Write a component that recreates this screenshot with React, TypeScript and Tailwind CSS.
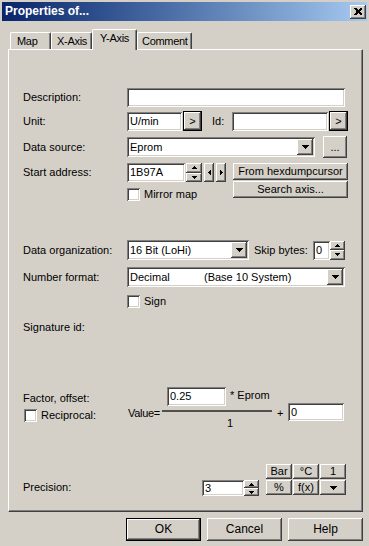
import React from 'react'

// classic 3D bevels
const RAISED =
  'bg-[#d4d0c8] shadow-[inset_-1px_-1px_0_#404040,inset_1px_1px_0_#ffffff,inset_-2px_-2px_0_#808080,inset_2px_2px_0_#d4d0c8]'
const SUNKEN =
  'bg-white shadow-[inset_1px_1px_0_#808080,inset_-1px_-1px_0_#ffffff,inset_2px_2px_0_#404040,inset_-2px_-2px_0_#d4d0c8]'

type Dir = 'up' | 'down' | 'left' | 'right'

// tiny pixel triangles
function Tri({ dir, n = 3 }: { dir: Dir; n?: number }) {
  const rows = Array.from({ length: n }, (_, i) => i)
  const span = n * 2 - 1
  const vertical = dir === 'up' || dir === 'down'
  const w = vertical ? span : n
  const h = vertical ? n : span
  return (
    <svg width={w} height={h} shapeRendering="crispEdges" className="block">
      {rows.map((i) => {
        const len = dir === 'up' || dir === 'left' ? i * 2 + 1 : span - i * 2
        const off = (span - len) / 2
        if (vertical) return <rect key={i} x={off} y={i} width={len} height={1} fill="#000" />
        return <rect key={i} x={i} y={off} width={1} height={len} fill="#000" />
      })}
    </svg>
  )
}

function Field({ className = '', children }: { className?: string; children?: React.ReactNode }) {
  return <div className={`${SUNKEN} flex items-center pl-[3px] ${className}`}>{children}</div>
}

function Btn({
  className = '',
  children,
  def = false
}: {
  className?: string
  children?: React.ReactNode
  def?: boolean
}) {
  return (
    <div
      className={`${RAISED} flex items-center justify-center ${def ? 'border border-black' : ''} ${className}`}
    >
      {children}
    </div>
  )
}

function Spin({ className = '' }: { className?: string }) {
  return (
    <div className={`flex flex-col ${className}`}>
      <div className={`${RAISED} flex-1 flex items-center justify-center`}>
        <Tri dir="up" />
      </div>
      <div className={`${RAISED} flex-1 flex items-center justify-center`}>
        <Tri dir="down" />
      </div>
    </div>
  )
}

function Select({ className = '', children }: { className?: string; children?: React.ReactNode }) {
  return (
    <div className={`${SUNKEN} h-[20px] flex items-center pl-[3px] pr-[2px] ${className}`}>
      <div className="flex-1 flex items-center">{children}</div>
      <div className={`${RAISED} w-[16px] h-[16px] flex items-center justify-center`}>
        <Tri dir="down" n={4} />
      </div>
    </div>
  )
}

function Check() {
  return <div className={`${SUNKEN} w-[13px] h-[13px] shrink-0`} />
}

function Tab({ label, width, active = false, pl }: { label: string; width: string; active?: boolean; pl: string }) {
  return (
    <div
      className={`${width} ${pl} flex items-center tracking-[-0.3px] border-l border-t border-r border-l-white border-t-white border-r-[#404040] rounded-t-[2px] shadow-[inset_-1px_0_0_#808080] bg-[#d4d0c8] ${
        active ? 'h-[21px] pb-[3px]' : 'h-[17px] mb-px pt-px'
      }`}
    >
      {label}
    </div>
  )
}

export default function App() {
  return (
    <div className="w-[369px] h-[546px] overflow-hidden bg-[#d4d0c8] text-black text-[11px] leading-[13px] font-['Liberation_Sans',Arial,sans-serif]">
      {/* Title bar */}
      <div className="mx-[2px] mt-[2px] h-[19px] flex items-center pl-[3px] bg-linear-to-r from-[#0a246a] to-[#a6caf0]">
        <span className="text-white font-bold text-[12px]">Properties of...</span>
        <Btn className="ml-auto mr-[1px] w-[16px] h-[14px]">
          <svg width="8" height="7" shapeRendering="crispEdges">
            <path d="M0 0h2l2 2 2-2h2v1l-2 2v1l2 2v1h-2l-2-2-2 2h-2v-1l2-2v-1l-2-2z" fill="#000" />
          </svg>
        </Btn>
      </div>

      <div className="pl-[8px]">
        {/* Tabs */}
        <div className="mt-[8px] ml-[2px] flex items-end h-[21px] -mb-px relative z-10">
          <Tab label="Map" width="w-[41px]" pl="pl-[6px]" />
          <Tab label="X-Axis" width="w-[41px]" pl="pl-[5px]" />
          <Tab label="Y-Axis" width="w-[45px]" pl="pl-[7px]" active />
          <Tab label="Comment" width="w-[55px]" pl="pl-[4px]" />
        </div>

        {/* Tab panel */}
        <div className="w-[355px] h-[463px] border border-t-white border-l-white border-r-[#404040] border-b-[#404040] shadow-[inset_-1px_-1px_0_#808080] pl-[14px]">
          {/* Description */}
          <div className="mt-[38px] h-[19px] flex items-center">
            <div className="w-[104px]">Description:</div>
            <Field className="w-[218px] h-[19px]" />
          </div>

          {/* Unit / Id */}
          <div className="mt-[4px] h-[20px] flex items-center">
            <div className="w-[104px]">Unit:</div>
            <Field className="w-[55px] h-[19px]">U/min</Field>
            <Btn def className="ml-px w-[19px] h-[20px]">&gt;</Btn>
            <div className="ml-[10px] w-[20px]">Id:</div>
            <Field className="w-[96px] h-[19px]" />
            <Btn def className="ml-px w-[19px] h-[20px]">&gt;</Btn>
          </div>

          {/* Data source */}
          <div className="mt-[5px] h-[22px] flex items-center">
            <div className="w-[104px]">Data source:</div>
            <Select className="w-[188px]">Eprom</Select>
            <Btn className="ml-[8px] w-[24px] h-[22px]">...</Btn>
          </div>

          {/* Start address */}
          <div className="mt-[5px] flex items-start">
            <div className="w-[104px] h-[19px] flex items-center">Start address:</div>
            <div className="flex flex-col">
              <div className="flex h-[19px]">
                <Field className="w-[58px] h-[19px]">1B97A</Field>
                <Spin className="ml-px w-[16px] h-[19px]" />
                <Btn className="ml-[2px] w-[10px] h-[19px]">
                  <Tri dir="left" />
                </Btn>
                <Btn className="ml-[2px] w-[10px] h-[19px]">
                  <Tri dir="right" />
                </Btn>
              </div>
              <div className="mt-[6px] h-[13px] flex items-center">
                <Check />
                <span className="ml-[4px]">Mirror map</span>
              </div>
            </div>
            <div className="ml-[7px] flex flex-col gap-px">
              <Btn className="w-[115px] h-[17px]">From hexdumpcursor</Btn>
              <Btn className="w-[115px] h-[17px]">Search axis...</Btn>
            </div>
          </div>

          {/* Data organization */}
          <div className="mt-[39px] h-[20px] flex items-center">
            <div className="w-[104px]">Data organization:</div>
            <Select className="w-[122px]">16 Bit (LoHi)</Select>
            <div className="ml-[5px] w-[59px]">Skip bytes:</div>
            <Field className="w-[17px] h-[19px]">0</Field>
            <Spin className="w-[15px] h-[19px]" />
          </div>

          {/* Number format */}
          <div className="mt-[7px] h-[20px] flex items-center">
            <div className="w-[104px]">Number format:</div>
            <Select className="w-[218px]">
              <span className="w-[74px]">Decimal</span>
              <span>(Base 10 System)</span>
            </Select>
          </div>

          {/* Sign */}
          <div className="mt-[8px] h-[13px] flex items-center pl-[104px]">
            <Check />
            <span className="ml-[4px]">Sign</span>
          </div>

          {/* Signature id */}
          <div className="mt-[13px] h-[13px] flex items-center">Signature id:</div>

          {/* Factor, offset */}
          <div className="mt-[53px] flex items-start">
            <div className="w-[105px] flex flex-col">
              <div className="mt-[5px] h-[13px]">Factor, offset:</div>
              <div className="mt-[4px] h-[13px] flex items-center pl-px">
                <Check />
                <span className="ml-[4px]">Reciprocal:</span>
              </div>
            </div>
            <div className="mt-[20px] w-[34px] h-[13px] tracking-[-0.3px]">Value=</div>
            <div className="w-[110px] flex flex-col">
              <div className="flex items-start pl-[5px]">
                <Field className="w-[59px] h-[19px]">0.25</Field>
                <span className="ml-[4px] mt-[2px]">* Eprom</span>
              </div>
              <div className="mt-[4px] h-[2px] bg-[#505050]" />
              <div className="mt-[5px] h-[13px] pl-[65px]">1</div>
            </div>
            <div className="mt-[20px] w-[16px] pl-[5px] h-[13px]">+</div>
            <Field className="mt-[16px] w-[56px] h-[18px]">0</Field>
          </div>

          {/* Precision */}
          <div className="mt-[34px] flex items-start">
            <div className="mt-[17px] w-[179px] h-[13px]">Precision:</div>
            <Field className="mt-[16px] w-[42px] h-[16px]">3</Field>
            <Spin className="mt-[16px] w-[15px] h-[16px]" />
            <div className="ml-[7px] grid grid-cols-[26px_26px_26px] grid-rows-[15px_15px] gap-px">
              <Btn>Bar</Btn>
              <Btn>°C</Btn>
              <Btn>1</Btn>
              <Btn>%</Btn>
              <Btn>f(x)</Btn>
              <Btn>
                <Tri dir="down" n={4} />
              </Btn>
            </div>
          </div>
        </div>

        {/* Dialog buttons */}
        <div className="mt-[6px] w-[355px] flex justify-end gap-[6px]">
          <Btn def className="w-[75px] h-[23px] text-[12px]">OK</Btn>
          <Btn className="w-[75px] h-[23px] text-[12px]">Cancel</Btn>
          <Btn className="w-[75px] h-[23px] text-[12px]">Help</Btn>
        </div>
      </div>
    </div>
  )
}
